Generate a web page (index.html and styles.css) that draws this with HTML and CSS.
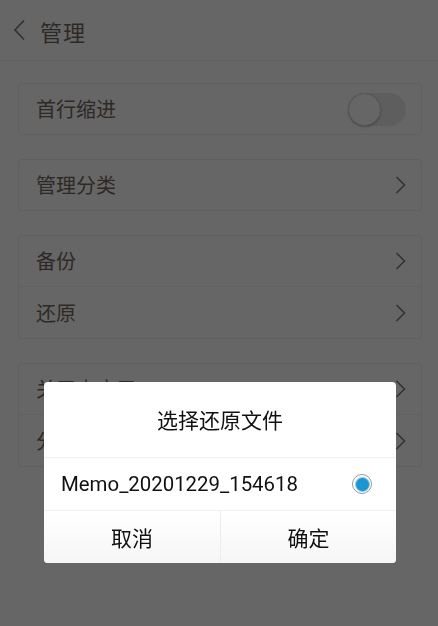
FILE: index.html
```html
<!DOCTYPE html>
<html lang="zh">
<head>
<meta charset="utf-8">
<title>管理</title>
<link rel="stylesheet" href="styles.css">
</head>
<body>
<div class="page">
  <header class="topbar">
    <svg class="back" width="13" height="22" viewBox="0 0 13 22"><path d="M11 1.5 L2 11 L11 20.5" fill="none" stroke="currentColor" stroke-width="1.6"/></svg>
    <span class="title">管理</span>
  </header>
  <main class="content">
    <section class="card">
      <div class="row"><span class="label">首行缩进</span><span class="toggle"><span class="knob"></span></span></div>
    </section>
    <section class="card">
      <div class="row"><span class="label">管理分类</span><svg class="chev" width="11" height="18" viewBox="0 0 11 18"><path d="M1.5 1 L9.5 9 L1.5 17" fill="none" stroke="currentColor" stroke-width="1.5"/></svg></div>
    </section>
    <section class="card">
      <div class="row"><span class="label">备份</span><svg class="chev" width="11" height="18" viewBox="0 0 11 18"><path d="M1.5 1 L9.5 9 L1.5 17" fill="none" stroke="currentColor" stroke-width="1.5"/></svg></div>
      <div class="row sep"><span class="label">还原</span><svg class="chev" width="11" height="18" viewBox="0 0 11 18"><path d="M1.5 1 L9.5 9 L1.5 17" fill="none" stroke="currentColor" stroke-width="1.5"/></svg></div>
    </section>
    <section class="card">
      <div class="row"><span class="label">关于本应用</span><svg class="chev" width="11" height="18" viewBox="0 0 11 18"><path d="M1.5 1 L9.5 9 L1.5 17" fill="none" stroke="currentColor" stroke-width="1.5"/></svg></div>
      <div class="row sep"><span class="label">分享给好友</span><svg class="chev" width="11" height="18" viewBox="0 0 11 18"><path d="M1.5 1 L9.5 9 L1.5 17" fill="none" stroke="currentColor" stroke-width="1.5"/></svg></div>
    </section>
  </main>
</div>
<div class="overlay">
  <div class="dialog">
    <div class="dlg-title">选择还原文件</div>
    <div class="dlg-item"><span class="fname">Memo_20201229_154618</span><span class="radio"><span class="dot"></span></span></div>
    <div class="dlg-buttons"><button class="btn">取消</button><button class="btn">确定</button></div>
  </div>
</div>
</body>
</html>
```

FILE: styles.css
```css
html, body {
  margin: 0;
  padding: 0;
  background: #ffffff;
  font-family: "Noto Sans CJK SC", "Noto Sans", sans-serif;
}
.page {
  width: 438px;
  height: 626px;
  background: #ffffff;
  color: #76685c;
}
.topbar {
  border-bottom: 1px solid #f0f0f0;
  display: flex;
  align-items: center;
  box-sizing: border-box;
  height: 61px;
}
.back {
  margin-left: 13px;
  color: #7a7a7a;
}
.title {
  margin-left: 14px;
  font-size: 22px;
  letter-spacing: 1px;
  line-height: 1;
  margin-top: 1px;
}
.content {
  padding: 22px 16px 0 18px;
  display: flex;
  flex-direction: column;
  gap: 24px;
}
.card {
  border: 1px solid #ededed;
  border-radius: 4px;
}
.row {
  height: 50px;
  display: flex;
  align-items: center;
  justify-content: space-between;
  padding: 0 15px 0 17px;
}
.row.sep {
  border-top: 1px solid #f2f2f2;
  height: 51px;
}
.label {
  font-size: 20px;
  line-height: 1;
}
.chev {
  color: #7a7a7a;
}
.toggle {
  width: 58px;
  height: 33px;
  border-radius: 17px;
  background: #ececec;
  position: relative;
  display: block;
}
.knob {
  position: absolute;
  left: 0;
  top: 0;
  width: 31px;
  height: 31px;
  border-radius: 50%;
  background: #ffffff;
  border: 1px solid #d6d6d6;
  box-shadow: 0 1px 2px rgba(0,0,0,0.25);
}
.overlay {
  position: fixed;
  inset: 0;
  background: rgba(0, 0, 0, 0.6);
}
.dialog {
  position: absolute;
  left: 44px;
  top: 382px;
  width: 352px;
  background: #ffffff;
  border-radius: 4px;
  overflow: hidden;
  color: #111111;
}
.dlg-title {
  height: 76px;
  display: flex;
  align-items: center;
  justify-content: center;
  font-size: 21px;
  border-bottom: 1px solid #f0f0f0;
  box-sizing: border-box;
  padding-bottom: 2px;
}
.dlg-item {
  height: 53px;
  display: flex;
  align-items: center;
  justify-content: space-between;
  padding: 0 24px 0 17px;
  border-bottom: 1px solid #f0f0f0;
  box-sizing: border-box;
}
.fname {
  font-family: Roboto, "Noto Sans", sans-serif;
  font-size: 20.4px;
  color: #111111;
}
.radio {
  width: 18px;
  height: 18px;
  border-radius: 50%;
  border: 1px solid #9a9a9a;
  background: #ffffff;
  display: flex;
  align-items: center;
  justify-content: center;
}
.dot {
  width: 13px;
  height: 13px;
  border-radius: 50%;
  background: #1897d4;
  box-shadow: 0 0 0 1px #8cc8ea;
}
.dlg-buttons {
  display: grid;
  grid-template-columns: 1fr 1fr;
  height: 52px;
}
.btn {
  border: 0;
  margin: 0;
  padding: 0;
  background: linear-gradient(#ffffff, #f6f6f6);
  font-family: "Noto Sans CJK SC", sans-serif;
  font-size: 21px;
  color: #111111;
}
.btn + .btn {
  border-left: 1px solid #ececec;
}
```
